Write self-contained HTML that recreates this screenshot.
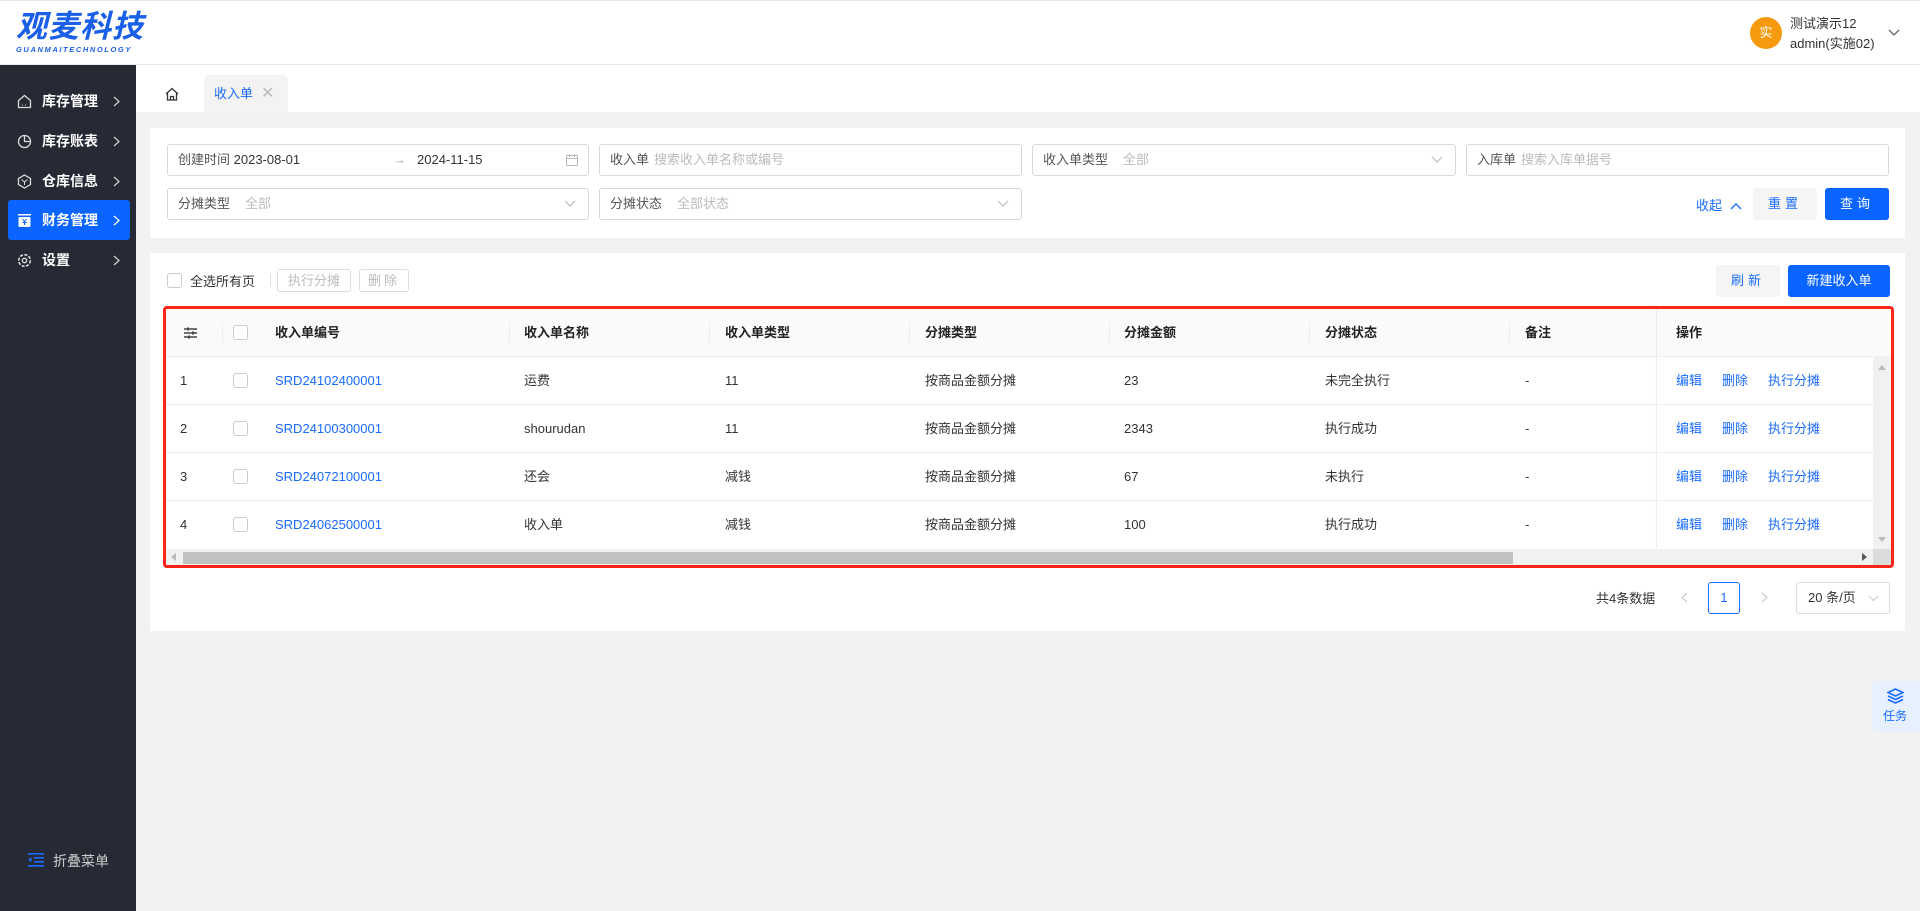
<!DOCTYPE html>
<html><head><meta charset="utf-8"><style>
*{box-sizing:border-box;margin:0;padding:0}
body{width:1920px;height:911px;overflow:hidden;background:#f2f2f2;font-family:"Liberation Sans","Noto Sans CJK SC",sans-serif;font-size:13px;color:#333;position:relative}
.a{position:absolute}
.hdr{left:0;top:0;width:1920px;height:65px;background:#fff;border-bottom:1px solid #e8e8e8;border-top:1px solid #e5e5e5}
.side{left:0;top:65px;width:136px;height:846px;background:#262a35}
.mi{position:absolute;left:8px;width:122px;height:40px;color:#fff;font-size:14px;font-weight:bold;line-height:40px;padding-left:34px;border-radius:3px}
.mi svg.ic{position:absolute;left:9px;top:13px}
.mi svg.ar{position:absolute;right:10px;top:15px}
.inp{position:absolute;height:32px;border:1px solid #d9d9d9;border-radius:3px;background:#fff;line-height:30px;padding-left:10px;color:#555;font-size:13px}
.inp .ph{color:#bbb;margin-left:8px}
.inp .dd{position:absolute;right:12px;top:0;color:#bbb}
.btn{position:absolute;border-radius:3px;text-align:center;font-size:13px}
.th{position:absolute;top:0;height:47px;line-height:47px;font-weight:bold;color:#222;font-size:13px}
.td{position:absolute;font-size:13px;line-height:48px;height:48px}
.lk{color:#1a6bff}
.cb{position:absolute;width:15px;height:15px;border:1px solid #ccc;border-radius:3px;background:#fff}
.sep{position:absolute;top:14px;width:1px;height:20px;background:#eee}
</style></head><body>
<div class="a hdr">
  <div class="a" style="left:16px;top:9px;font-size:31px;font-weight:bold;font-style:italic;color:#1a5fe8;letter-spacing:1px;line-height:34px">观麦科技</div>
  <div class="a" style="left:16px;top:45px;font-size:7.5px;line-height:8px;font-weight:bold;font-style:italic;color:#1a5fe8;letter-spacing:1.6px">GUANMAITECHNOLOGY</div>
  <div class="a" style="left:1750px;top:16px;width:32px;height:32px;border-radius:50%;background:#f59a0e;color:#fff;text-align:center;line-height:32px;font-size:13px">实</div>
  <div class="a" style="left:1790px;top:13px;font-size:13px;color:#333;line-height:20px">测试演示12<br>admin(实施02)</div>
  <svg class="a" style="left:1888px;top:28px" width="12" height="8"><path d="M1 1l5 5 5-5" fill="none" stroke="#666" stroke-width="1.3"/></svg>
</div>
<div class="a side">
  <div class="mi" style="top:16px"><svg class="ic" width="15" height="15"><path d="M1.5 6.5L7.5 1.5 13.5 6.5V13.5H1.5Z" fill="none" stroke="#ddd" stroke-width="1.3"/><path d="M5 11h1M8 11h1" stroke="#ddd"/></svg>库存管理<svg class="ar" width="7" height="11"><path d="M1 1l5 4.5-5 4.5" fill="none" stroke="#ccc" stroke-width="1.3"/></svg></div>
  <div class="mi" style="top:56px"><svg class="ic" width="15" height="15"><circle cx="7.5" cy="7.5" r="6" fill="none" stroke="#ddd" stroke-width="1.3"/><path d="M7.5 1.5V7.5H13.5" fill="none" stroke="#ddd" stroke-width="1.3"/></svg>库存账表<svg class="ar" width="7" height="11"><path d="M1 1l5 4.5-5 4.5" fill="none" stroke="#ccc" stroke-width="1.3"/></svg></div>
  <div class="mi" style="top:96px"><svg class="ic" width="15" height="15"><path d="M7.5 1L13.5 4.5V10.5L7.5 14 1.5 10.5V4.5Z" fill="none" stroke="#ddd" stroke-width="1.3"/><path d="M4.5 5.5L7.5 8 10.5 5.5M7.5 8V11" fill="none" stroke="#ddd"/></svg>仓库信息<svg class="ar" width="7" height="11"><path d="M1 1l5 4.5-5 4.5" fill="none" stroke="#ccc" stroke-width="1.3"/></svg></div>
  <div class="mi" style="top:135px;background:#0a64ff"><svg class="ic" width="15" height="15"><rect x="1" y="1" width="13" height="1.5" fill="#fff"/><rect x="1.5" y="4" width="12" height="10" rx="1.5" fill="#fff"/><path d="M5.5 6l2 2.5 2-2.5M7.5 8.5V12M5.5 9.5h4" stroke="#0a64ff" fill="none"/></svg>财务管理<svg class="ar" width="7" height="11"><path d="M1 1l5 4.5-5 4.5" fill="none" stroke="#fff" stroke-width="1.3"/></svg></div>
  <div class="mi" style="top:175px"><svg class="ic" width="15" height="15"><circle cx="7.5" cy="7.5" r="5.8" fill="none" stroke="#ddd" stroke-width="1.6" stroke-dasharray="3 1.5"/><circle cx="7.5" cy="7.5" r="2.2" fill="none" stroke="#ddd" stroke-width="1.3"/></svg>设置<svg class="ar" width="7" height="11"><path d="M1 1l5 4.5-5 4.5" fill="none" stroke="#ccc" stroke-width="1.3"/></svg></div>
  <svg class="a" style="left:28px;top:788px" width="16" height="14"><rect x="0" y="0" width="16" height="1.6" fill="#1a6bff"/><rect x="6" y="4" width="10" height="1.6" fill="#1a6bff"/><rect x="6" y="8" width="10" height="1.6" fill="#1a6bff"/><rect x="0" y="12" width="16" height="1.6" fill="#1a6bff"/><path d="M0 6.8L3.5 4.3V9.3Z" fill="#1a6bff"/></svg>
  <div class="a" style="left:53px;top:786px;color:#ccc;font-size:14px">折叠菜单</div>
</div>
<div class="a" style="left:136px;top:65px;width:1784px;height:47px;background:#fff"></div>
<svg class="a" style="left:165px;top:87px" width="14" height="14"><path d="M1 7L7 1.5 13 7M2.5 5.8V13H11.5V5.8M5.5 13V9.5H8.5V13" fill="none" stroke="#333" stroke-width="1.3"/></svg>
<div class="a" style="left:204px;top:75px;width:84px;height:37px;background:#f3f3f3;border-radius:6px 6px 0 0;color:#1a6bff;font-size:13px;line-height:37px;padding-left:10px">收入单<span style="color:#bbb;font-size:16px;margin-left:8px">✕</span></div>

<div class="a" style="left:150px;top:128px;width:1755px;height:110px;background:#fff"></div>
<div class="inp" style="left:167px;top:144px;width:422px">创建时间 <span style="color:#333">2023-08-01</span><span style="position:absolute;left:225px;color:#aaa">→</span><span style="position:absolute;left:249px;color:#333">2024-11-15</span><svg style="position:absolute;right:10px;top:9px" width="12" height="12"><rect x="0.5" y="1.5" width="11" height="10" fill="none" stroke="#bbb"/><path d="M0.5 4.5h11M3.5 0v3M8.5 0v3" stroke="#bbb"/></svg></div>
<div class="inp" style="left:599px;top:144px;width:423px">收入单<span class="ph" style="margin-left:5px">搜索收入单名称或编号</span></div>
<div class="inp" style="left:1032px;top:144px;width:424px">收入单类型<span class="ph" style="margin-left:15px">全部</span><svg class="dd" style="top:11px" width="12" height="8"><path d="M1 1l5 5 5-5" fill="none" stroke="#bbb" stroke-width="1.2"/></svg></div>
<div class="inp" style="left:1466px;top:144px;width:423px">入库单<span class="ph" style="margin-left:5px">搜索入库单据号</span></div>
<div class="inp" style="left:167px;top:188px;width:422px">分摊类型<span class="ph" style="margin-left:15px">全部</span><svg class="dd" style="top:11px" width="12" height="8"><path d="M1 1l5 5 5-5" fill="none" stroke="#bbb" stroke-width="1.2"/></svg></div>
<div class="inp" style="left:599px;top:188px;width:423px">分摊状态<span class="ph" style="margin-left:15px">全部状态</span><svg class="dd" style="top:11px" width="12" height="8"><path d="M1 1l5 5 5-5" fill="none" stroke="#bbb" stroke-width="1.2"/></svg></div>
<div class="a" style="left:1696px;top:195px;color:#1a6bff;font-size:13px">收起 <svg width="12" height="8" style="margin-left:4px"><path d="M1 7l5-5 5 5" fill="none" stroke="#1a6bff" stroke-width="1.4"/></svg></div>
<div class="btn" style="left:1753px;top:188px;width:64px;height:32px;background:#f5f5f5;color:#1a6bff;line-height:32px;letter-spacing:4px">重置</div>
<div class="btn" style="left:1825px;top:188px;width:64px;height:32px;background:#0a64ff;color:#fff;line-height:32px;letter-spacing:4px">查询</div>

<div class="a" style="left:150px;top:253px;width:1755px;height:378px;background:#fff"></div>
<div class="cb" style="left:167px;top:273px"></div>
<div class="a" style="left:190px;top:271px;font-size:13px">全选所有页</div>
<div class="a" style="left:270px;top:273px;width:1px;height:14px;background:#ddd"></div>
<div class="btn" style="left:277px;top:269px;width:74px;height:23px;border:1px solid #ddd;color:#bbb;line-height:21px">执行分摊</div>
<div class="btn" style="left:359px;top:269px;width:50px;height:23px;border:1px solid #ddd;color:#bbb;line-height:21px;letter-spacing:3px">删除</div>
<div class="btn" style="left:1716px;top:265px;width:64px;height:32px;background:#f5f5f5;color:#1a6bff;line-height:32px;letter-spacing:4px">刷新</div>
<div class="btn" style="left:1788px;top:265px;width:102px;height:32px;background:#0a64ff;color:#fff;line-height:32px">新建收入单</div>

<div class="a" style="left:163px;top:306px;width:1731px;height:262px;border:3px solid #ff2418;border-radius:4px;overflow:hidden;background:#fff">
 <div class="a" style="left:0;top:0;width:1725px;height:48px;background:#fafafa;border-bottom:1px solid #eee">
  <svg class="a" style="left:18px;top:18px" width="13" height="12"><path d="M0 2h13M0 6h13M0 10h13" stroke="#444" stroke-width="1.4"/><rect x="3" y="0.5" width="2" height="3" fill="#444"/><rect x="8" y="4.5" width="2" height="3" fill="#444"/><rect x="4" y="8.5" width="2" height="3" fill="#444"/></svg>
  <div class="sep" style="left:56px"></div>
  <div class="cb" style="left:67px;top:16px"></div>
  <div class="th" style="left:109px">收入单编号</div><div class="sep" style="left:343px"></div>
  <div class="th" style="left:358px">收入单名称</div><div class="sep" style="left:543px"></div>
  <div class="th" style="left:559px">收入单类型</div><div class="sep" style="left:743px"></div>
  <div class="th" style="left:759px">分摊类型</div><div class="sep" style="left:943px"></div>
  <div class="th" style="left:958px">分摊金额</div><div class="sep" style="left:1143px"></div>
  <div class="th" style="left:1159px">分摊状态</div><div class="sep" style="left:1343px"></div>
  <div class="th" style="left:1359px">备注</div>
 </div>
 <div class="a" style="left:1490px;top:0;width:1px;height:240px;background:#eee;box-shadow:-3px 0 6px rgba(0,0,0,.05)"></div>
 <div class="th" style="left:1510px">操作</div>
 <div class="a" style="left:0;top:48px;width:1707px">
  <div style="position:relative;height:48px;border-bottom:1px solid #eee"><div class="td" style="left:14px">1</div><div class="cb" style="left:67px;top:16px"></div><div class="td lk" style="left:109px">SRD24102400001</div><div class="td" style="left:358px">运费</div><div class="td" style="left:559px">11</div><div class="td" style="left:759px">按商品金额分摊</div><div class="td" style="left:958px">23</div><div class="td" style="left:1159px">未完全执行</div><div class="td" style="left:1359px">-</div><div class="td lk" style="left:1510px">编辑</div><div class="td lk" style="left:1556px">删除</div><div class="td lk" style="left:1602px">执行分摊</div></div>
  <div style="position:relative;height:48px;border-bottom:1px solid #eee"><div class="td" style="left:14px">2</div><div class="cb" style="left:67px;top:16px"></div><div class="td lk" style="left:109px">SRD24100300001</div><div class="td" style="left:358px">shourudan</div><div class="td" style="left:559px">11</div><div class="td" style="left:759px">按商品金额分摊</div><div class="td" style="left:958px">2343</div><div class="td" style="left:1159px">执行成功</div><div class="td" style="left:1359px">-</div><div class="td lk" style="left:1510px">编辑</div><div class="td lk" style="left:1556px">删除</div><div class="td lk" style="left:1602px">执行分摊</div></div>
  <div style="position:relative;height:48px;border-bottom:1px solid #eee"><div class="td" style="left:14px">3</div><div class="cb" style="left:67px;top:16px"></div><div class="td lk" style="left:109px">SRD24072100001</div><div class="td" style="left:358px">还会</div><div class="td" style="left:559px">减钱</div><div class="td" style="left:759px">按商品金额分摊</div><div class="td" style="left:958px">67</div><div class="td" style="left:1159px">未执行</div><div class="td" style="left:1359px">-</div><div class="td lk" style="left:1510px">编辑</div><div class="td lk" style="left:1556px">删除</div><div class="td lk" style="left:1602px">执行分摊</div></div>
  <div style="position:relative;height:48px"><div class="td" style="left:14px">4</div><div class="cb" style="left:67px;top:16px"></div><div class="td lk" style="left:109px">SRD24062500001</div><div class="td" style="left:358px">收入单</div><div class="td" style="left:559px">减钱</div><div class="td" style="left:759px">按商品金额分摊</div><div class="td" style="left:958px">100</div><div class="td" style="left:1159px">执行成功</div><div class="td" style="left:1359px">-</div><div class="td lk" style="left:1510px">编辑</div><div class="td lk" style="left:1556px">删除</div><div class="td lk" style="left:1602px">执行分摊</div></div>
 </div>
 <div class="a" style="left:1707px;top:48px;width:18px;height:192px;background:#f1f1f1"></div>
 <svg class="a" style="left:1712px;top:56px" width="8" height="5"><path d="M0 5L4 0 8 5Z" fill="#bbb"/></svg>
 <svg class="a" style="left:1712px;top:228px" width="8" height="5"><path d="M0 0L4 5 8 0Z" fill="#bbb"/></svg>
 <div class="a" style="left:0;top:240px;width:1707px;height:16px;background:#f1f1f1"></div>
 <div class="a" style="left:17px;top:243px;width:1330px;height:12px;background:#c1c1c1"></div>
 <svg class="a" style="left:5px;top:244px" width="5" height="8"><path d="M5 0L0 4 5 8Z" fill="#bbb"/></svg>
 <svg class="a" style="left:1696px;top:244px" width="5" height="8"><path d="M0 0L5 4 0 8Z" fill="#555"/></svg>
 <div class="a" style="left:1707px;top:240px;width:18px;height:16px;background:#dcdcdc"></div>
</div>

<div class="a" style="left:1596px;top:588px;font-size:13px">共4条数据</div>
<svg class="a" style="left:1681px;top:592px" width="7" height="11"><path d="M6 1L1 5.5 6 10" fill="none" stroke="#ccc" stroke-width="1.2"/></svg>
<div class="a" style="left:1708px;top:582px;width:32px;height:32px;border:1px solid #1a6bff;border-radius:3px;color:#1a6bff;text-align:center;line-height:30px">1</div>
<svg class="a" style="left:1761px;top:592px" width="7" height="11"><path d="M1 1L6 5.5 1 10" fill="none" stroke="#ccc" stroke-width="1.2"/></svg>
<div class="a" style="left:1796px;top:582px;width:94px;height:32px;border:1px solid #ddd;border-radius:3px;line-height:30px;padding-left:11px;font-size:13px">20 条/页<svg style="position:absolute;right:10px;top:12px" width="11" height="7"><path d="M1 1l4.5 4.5L10 1" fill="none" stroke="#ccc" stroke-width="1.2"/></svg></div>

<div class="a" style="left:1872px;top:681px;width:48px;height:50px;background:#e6f0ff;border-radius:5px 0 0 5px">
 <svg class="a" style="left:15px;top:7px" width="17" height="16"><path d="M8.5 1L16 4.5 8.5 8 1 4.5Z" fill="none" stroke="#1a6bff" stroke-width="1.6"/><path d="M1 8L8.5 11.5 16 8M1 11.5L8.5 15 16 11.5" fill="none" stroke="#1a6bff" stroke-width="1.6"/></svg>
 <div class="a" style="left:11px;top:26px;color:#1a6bff;font-size:12px">任务</div>
</div>
</body></html>
